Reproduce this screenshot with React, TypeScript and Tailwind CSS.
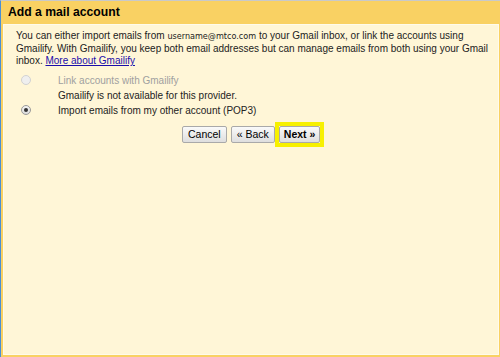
import React from 'react'

const Radio = ({ checked, disabled }: { checked?: boolean; disabled?: boolean }) => (
  <span
    className={`flex h-[10px] w-[10px] items-center justify-center rounded-full border ${
      disabled ? 'border-[#d2d2d2] bg-[#efefef]' : 'border-[#9a9a9a] bg-gradient-to-b from-[#f4f4f4] to-[#dcdcdc]'
    }`}
  >
    {checked && <span className="h-[4px] w-[4px] rounded-full bg-[#333]" />}
  </span>
)

const Button = ({ label, bold }: { label: string; bold?: boolean }) => (
  <button
    className={`h-[17px] rounded-[2px] border border-[#a9a9a9] bg-gradient-to-b from-[#fafafa] to-[#dedede] text-[10.5px] leading-none text-black ${
      bold ? 'px-[4px] font-bold' : 'px-[5px]'
    }`}
  >
    {label}
  </button>
)

export default function App() {
  return (
    <div
      className="h-[357px] w-[500px] overflow-hidden border-l border-t border-l-[#4a8fd6] border-t-[#c9c9c9] bg-white"
      style={{ fontFamily: '"Liberation Sans", Arial, sans-serif' }}
    >
      <div className="flex h-full flex-col border-b-2 border-l-2 border-r border-[#f9d163]">
        {/* Header */}
        <div className="flex h-[23px] shrink-0 items-center bg-[#f9d163] pl-[5px]">
          <h1 className="text-[12.2px] font-bold text-black">Add a mail account</h1>
        </div>

        {/* Body */}
        <div className="flex-1 border border-[#fffbeb] bg-[#fff6d7] pl-[12px] pr-[8px] pt-[5px] text-[#222]">
          <p className="text-[10px] leading-[12.5px]">
            You can either import emails from{' '}
            <span
              className="text-[9px] leading-[12.5px]"
              style={{ fontFamily: '"DejaVu Sans Condensed", sans-serif' }}
            >
              username@mtco.com
            </span>{' '}
            to your Gmail inbox, or link the accounts using Gmailify. With Gmailify, you keep both email addresses but
            can manage emails from both using your Gmail inbox.{' '}
            <a href="#" className="text-[#1a0dab] underline">
              More about Gmailify
            </a>
          </p>

          <div className="mt-[5px] flex flex-col text-[10px]">
            <div className="flex h-[15px] items-center">
              <span className="ml-[5px] mr-[27px]">
                <Radio disabled />
              </span>
              <span className="text-[#a0a0a0]">Link accounts with Gmailify</span>
            </div>
            <div className="flex h-[15px] items-center pl-[42px]">
              <span>Gmailify is not available for this provider.</span>
            </div>
            <div className="flex h-[15px] items-center">
              <span className="ml-[5px] mr-[27px]">
                <Radio checked />
              </span>
              <span>Import emails from my other account (POP3)</span>
            </div>
          </div>

          <div className="mt-[4px] flex items-center gap-[4px] pl-[166px]">
            <Button label="Cancel" />
            <Button label="« Back" />
            <div className="-ml-[4px] flex border-[4px] border-[#f7f000]">
              <Button label="Next »" bold />
            </div>
          </div>
        </div>
      </div>
    </div>
  )
}
